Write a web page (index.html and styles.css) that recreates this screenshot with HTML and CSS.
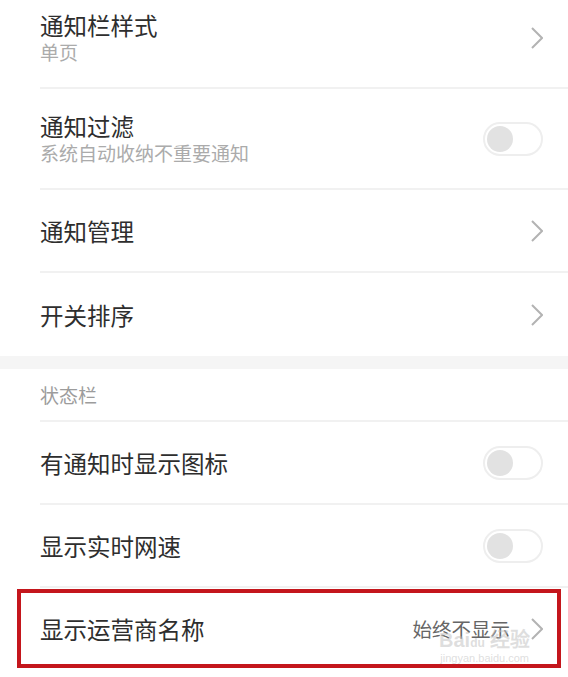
FILE: index.html
```html
<!DOCTYPE html>
<html lang="zh-CN">
<head>
  <meta charset="UTF-8">
  <meta name="viewport" content="width=device-width, initial-scale=1.0">
  <title>通知与状态栏</title>
  <link rel="stylesheet" href="styles.css">
</head>
<body>
  <div class="settings">

    <!-- 通知 -->
    <div class="item item-tall">
      <div class="item-text">
        <div class="item-title">通知栏样式</div>
        <div class="item-sub">单页</div>
      </div>
      <svg class="chevron" width="12" height="22" viewBox="0 0 12 22"><polyline points="1,1 11,11 1,21" /></svg>
    </div>
    <div class="item item-tall">
      <div class="item-text">
        <div class="item-title">通知过滤</div>
        <div class="item-sub">系统自动收纳不重要通知</div>
      </div>
      <span class="switch"><span class="knob"></span></span>
    </div>
    <div class="item">
      <div class="item-title">通知管理</div>
      <svg class="chevron" width="12" height="22" viewBox="0 0 12 22"><polyline points="1,1 11,11 1,21" /></svg>
    </div>
    <div class="item item-last">
      <div class="item-title">开关排序</div>
      <svg class="chevron" width="12" height="22" viewBox="0 0 12 22"><polyline points="1,1 11,11 1,21" /></svg>
    </div>

    <div class="group-gap"></div>

    <!-- 状态栏 -->
    <div class="item section-head">状态栏</div>
    <div class="item">
      <div class="item-title">有通知时显示图标</div>
      <span class="switch"><span class="knob"></span></span>
    </div>
    <div class="item">
      <div class="item-title">显示实时网速</div>
      <span class="switch"><span class="knob"></span></span>
    </div>

    <div class="highlight">
      <div class="item item-last">
        <div class="item-title">显示运营商名称</div>
        <div class="item-right">
          <span class="item-value">始终不显示</span>
          <svg class="chevron" width="12" height="22" viewBox="0 0 12 22"><polyline points="1,1 11,11 1,21" /></svg>
        </div>
      </div>
      <!-- watermark from the source screenshot -->
      <div class="watermark">
        <span class="wm-logo">Bai<span class="wm-paw">du</span> 经验</span>
        <span class="wm-url">jingyan.baidu.com</span>
      </div>
    </div>

  </div>
</body>
</html>
```

FILE: styles.css
```css
body {
  margin: 0;
  background-color: #ffffff;
  font-family: "Noto Sans CJK SC", "Noto Sans", sans-serif;
  color: #333333;
}
.settings {
  margin-top: -12px;
}
.item {
  display: flex;
  align-items: center;
  justify-content: space-between;
  height: 81px;
  margin-left: 40px;
  padding-right: 25px;
  border-bottom: 2px solid #f1f1f1;
}
.item-tall {
  height: 99px;
}
.item-last {
  border-bottom: none;
  height: 83px;
}
.item-title {
  font-size: 23.5px;
  line-height: 28px;
  color: #2e2e2e;
}
.item-sub {
  font-size: 19px;
  line-height: 24px;
  color: #ababab;
  margin-top: 1px;
}
.chevron {
  fill: none;
  stroke: #b3b3b3;
  stroke-width: 2;
}
.switch {
  box-sizing: border-box;
  width: 60px;
  height: 34px;
  border: 2px solid #eeeeee;
  border-radius: 17px;
  background-color: #ffffff;
  display: flex;
  align-items: center;
  padding-left: 2px;
}
.knob {
  width: 26px;
  height: 26px;
  border-radius: 50%;
  background-color: #e2e2e2;
}
.group-gap {
  height: 13px;
  background-color: #f5f5f5;
}
.section-head {
  height: 51px;
  font-size: 19px;
  color: #9c9c9c;
}
.highlight {
  position: relative;
  margin: 1px 7px 0 17px;
  border: 4px solid #c4161c;
}
.highlight .item {
  height: 71px;
  margin-left: 19px;
  padding-right: 14px;
}
.item-right {
  display: flex;
  align-items: center;
  gap: 21px;
}
.item-value {
  font-size: 19.5px;
  color: #666666;
}
.watermark {
  position: absolute;
  left: 418px;
  top: 38px;
  display: flex;
  flex-direction: column;
  align-items: center;
  color: rgba(190, 190, 190, 0.5);
  pointer-events: none;
}
.wm-logo {
  font-family: "Liberation Sans", sans-serif;
  font-size: 20px;
  font-weight: bold;
  line-height: 18px;
}
.wm-paw {
  font-size: 12px;
}
.wm-url {
  font-family: "Liberation Sans", sans-serif;
  font-size: 11px;
  line-height: 12px;
}
```
